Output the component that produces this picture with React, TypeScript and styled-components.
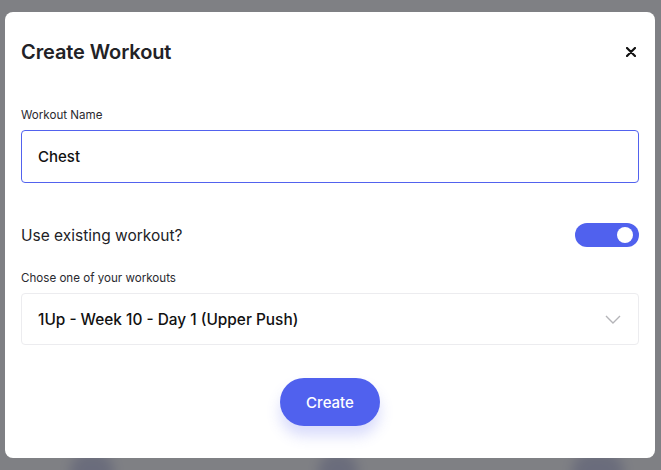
import React, { useState } from "react";
import styled, { createGlobalStyle } from "styled-components";

const GlobalStyle = createGlobalStyle`
  * { box-sizing: border-box; }
  html, body { margin: 0; padding: 0; }
  body {
    font-family: "Inter", "Noto Sans", sans-serif;
    background: #f4f5fb;
    width: 661px;
    height: 470px;
    overflow: hidden;
  }
`;

const Page = styled.div`
  position: relative;
  width: 661px;
  height: 470px;
  overflow: hidden;
  background: #fbfbfd;
`;

const Blob = styled.div<{ $x: number; $w: number }>`
  position: absolute;
  left: ${(p) => p.$x}px;
  top: 452px;
  width: ${(p) => p.$w}px;
  height: 40px;
  border-radius: 20px;
  background: #2f3aa8;
  filter: blur(6px);
`;

const Overlay = styled.div`
  position: absolute;
  inset: 0;
  background: rgba(113, 114, 119, 0.9);
  display: flex;
  justify-content: flex-start;
  padding: 12px 0 0 5px;
`;

const Modal = styled.div`
  width: 650px;
  height: 446px;
  background: #ffffff;
  border-radius: 8px;
  padding: 0 16px;
  display: flex;
  flex-direction: column;
`;

const Header = styled.div`
  display: flex;
  align-items: center;
  justify-content: space-between;
  height: 24px;
  margin-top: 28px;
`;

const Title = styled.h2`
  margin: 0;
  font-size: 20px;
  font-weight: 600;
  color: #222226;
  letter-spacing: -0.1px;
`;

const CloseButton = styled.button`
  border: 0;
  background: transparent;
  padding: 0;
  width: 12px;
  height: 12px;
  margin-right: 2px;
  display: flex;
  align-items: center;
  justify-content: center;
  cursor: pointer;
`;

const FieldLabel = styled.label<{ $top: number }>`
  display: block;
  margin-top: ${(p) => p.$top}px;
  font-size: 11.6px;
  line-height: 14px;
  color: #2a2a30;
`;

const TextInput = styled.input`
  margin-top: 8px;
  width: 100%;
  height: 53px;
  border: 1px solid #5262ee;
  border-radius: 4px;
  padding: 0 16px;
  font-family: inherit;
  font-size: 15px;
  font-weight: 500;
  color: #111;
  outline: none;
`;

const ToggleRow = styled.div`
  margin-top: 40px;
  height: 24px;
  display: flex;
  align-items: center;
  justify-content: space-between;
`;

const ToggleText = styled.span`
  font-size: 15.5px;
  color: #222226;
`;

const Switch = styled.button<{ $on: boolean }>`
  position: relative;
  width: 64px;
  height: 24px;
  border-radius: 12px;
  border: 0;
  padding: 0;
  background: ${(p) => (p.$on ? "#5061ee" : "#d6d8e4")};
  cursor: pointer;
`;

const Knob = styled.span<{ $on: boolean }>`
  position: absolute;
  top: 4px;
  left: ${(p) => (p.$on ? "42px" : "6px")};
  width: 16px;
  height: 16px;
  border-radius: 50%;
  background: #fff;
`;

const Select = styled.div`
  margin-top: 8px;
  height: 52px;
  border: 1px solid #ececef;
  border-radius: 4px;
  padding: 0 17px 0 16px;
  display: flex;
  align-items: center;
  justify-content: space-between;
`;

const SelectValue = styled.span`
  font-size: 15.4px;
  font-weight: 500;
  color: #111;
`;

const Footer = styled.div`
  margin-top: 33px;
  display: flex;
  justify-content: center;
`;

const PrimaryButton = styled.button`
  width: 100px;
  height: 48px;
  border: 0;
  border-radius: 24px;
  background: #5061ee;
  color: #fff;
  font-family: inherit;
  font-size: 15px;
  font-weight: 500;
  box-shadow: 0 10px 14px rgba(80, 97, 238, 0.22);
  cursor: pointer;
`;

export default function App() {
  const [name, setName] = useState("Chest");
  const [on, setOn] = useState(true);
  return (
    <>
      <GlobalStyle />
      <Page>
        <Blob $x={70} $w={44} />
        <Blob $x={318} $w={40} />
        <Blob $x={572} $w={52} />
        <Overlay>
          <Modal>
            <Header>
              <Title>Create Workout</Title>
              <CloseButton aria-label="Close">
                <svg width="10" height="10" viewBox="0 0 10 10">
                  <path d="M1 1L9 9M9 1L1 9" stroke="#111" strokeWidth="2.2" strokeLinecap="round" />
                </svg>
              </CloseButton>
            </Header>
            <FieldLabel $top={44}>Workout Name</FieldLabel>
            <TextInput value={name} onChange={(e) => setName(e.target.value)} />
            <ToggleRow>
              <ToggleText>Use existing workout?</ToggleText>
              <Switch $on={on} onClick={() => setOn(!on)} aria-label="Use existing workout">
                <Knob $on={on} />
              </Switch>
            </ToggleRow>
            <FieldLabel $top={24}>Chose one of your workouts</FieldLabel>
            <Select>
              <SelectValue>1Up - Week 10 - Day 1 (Upper Push)</SelectValue>
              <svg width="16" height="9" viewBox="0 0 16 9">
                <path d="M1 1L8 8L15 1" stroke="#b4b4b8" strokeWidth="1.4" fill="none" />
              </svg>
            </Select>
            <Footer>
              <PrimaryButton>Create</PrimaryButton>
            </Footer>
          </Modal>
        </Overlay>
      </Page>
    </>
  );
}
